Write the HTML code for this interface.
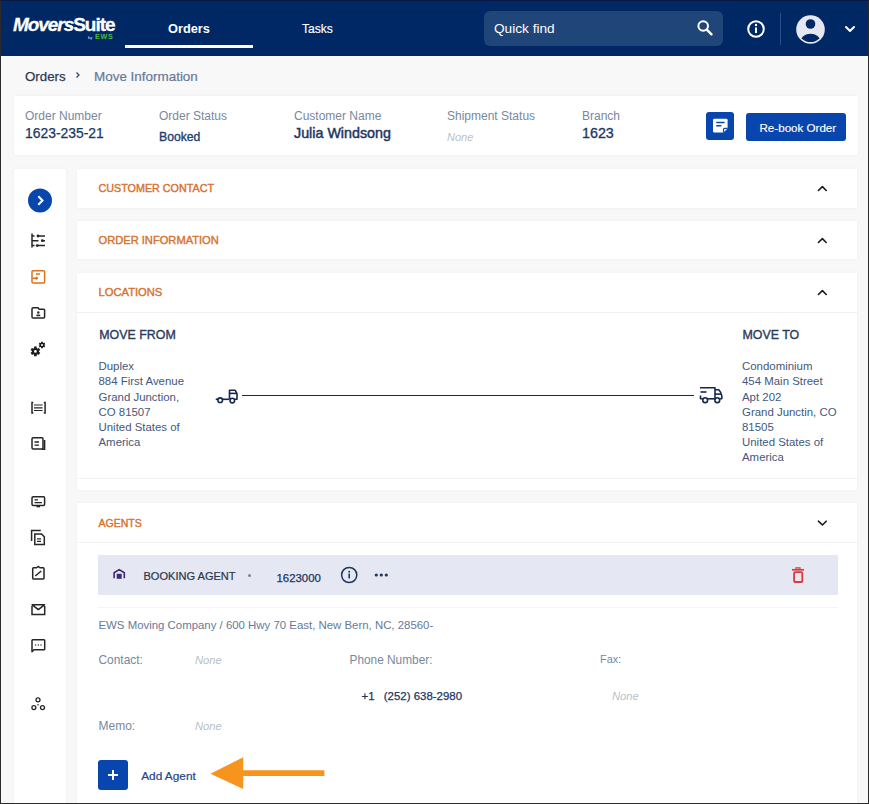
<!DOCTYPE html>
<html><head><meta charset="utf-8">
<style>
*{margin:0;padding:0;box-sizing:border-box}
html,body{width:869px;height:804px;overflow:hidden}
body{font-family:"Liberation Sans",sans-serif;background:#f8f8f8;position:relative}
.a{position:absolute;white-space:nowrap;line-height:normal}
svg.a{overflow:visible}
.card{position:absolute;background:#fff;box-shadow:0 0 3px rgba(0,0,0,0.05)}
#frame{position:absolute;left:0;top:0;width:869px;height:804px;border:1px solid #2b2b2b;border-top-color:#0a1a45;z-index:50}
</style></head><body>
<div class="a" style="left:0px;top:0px;width:869px;height:56px;background:#002864;"></div>
<div class="a" style="left:13px;top:13.92px;font-size:19px;color:#fff;font-weight:bold;-webkit-text-stroke:0.3px #fff;letter-spacing:-1.05px"><i>Movers</i>Suite</div>
<div class="a" style="left:88px;top:34.82px;font-size:4px;color:#dfe6f0">by</div>
<div class="a" style="left:95px;top:32.18px;font-size:7.2px;color:#4cbb3c;font-weight:bold;letter-spacing:0.75px">EWS</div>
<div class="a" style="left:168px;top:21.22px;font-size:12.8px;color:#fff;font-weight:bold">Orders</div>
<div class="a" style="left:125px;top:45px;width:128px;height:2.5px;background:#fff;"></div>
<div class="a" style="left:302px;top:21.87px;font-size:12.1px;color:#fff;-webkit-text-stroke:0.15px #fff">Tasks</div>
<div class="a" style="left:484px;top:11px;width:239px;height:35px;background:#204578;border-radius:6px"></div>
<div class="a" style="left:494px;top:21.44px;font-size:13.65px;color:#fff">Quick find</div>
<svg class="a" style="left:690px;top:14px" width="30" height="28" viewBox="0 0 30 28"><circle cx="13.2" cy="12" r="4.8" fill="none" stroke="#fff" stroke-width="2"/><path d="M16.8 15.6 L21.5 20.3" stroke="#fff" stroke-width="2.4" stroke-linecap="round"/></svg>
<svg class="a" style="left:744px;top:17px" width="24" height="24" viewBox="0 0 24 24"><circle cx="12" cy="12" r="7.8" fill="none" stroke="#fff" stroke-width="2"/><rect x="11" y="10.5" width="2" height="5.5" fill="#fff"/><circle cx="12" cy="8" r="1.2" fill="#fff"/></svg>
<div class="a" style="left:780px;top:13px;width:1px;height:32px;background:#2a4f86;"></div>
<svg class="a" style="left:795px;top:14px" width="31" height="31" viewBox="0 0 31 31"><defs><clipPath id="av"><circle cx="15.5" cy="15.5" r="12.6"/></clipPath></defs><circle cx="15.5" cy="15.5" r="14.3" fill="#e6e8f1"/><g clip-path="url(#av)"><circle cx="15.5" cy="10" r="4.8" fill="#002864"/><ellipse cx="15.5" cy="27.5" rx="10" ry="7.8" fill="#002864"/></g></svg>
<svg class="a" style="left:843px;top:22px" width="14" height="14" viewBox="0 0 14 14"><path d="M3 5 L7 9 L11 5" fill="none" stroke="#fff" stroke-width="2" stroke-linecap="round" stroke-linejoin="round"/></svg>
<div class="a" style="left:25px;top:68.76px;font-size:13.3px;color:#2c3a55;-webkit-text-stroke:0.25px #2c3a55">Orders</div>
<svg class="a" style="left:74px;top:70px" width="8" height="10" viewBox="0 0 8 10"><path d="M2.5 2.5 L5 5 L2.5 7.5" fill="none" stroke="#3a4a66" stroke-width="1.3"/></svg>
<div class="a" style="left:94px;top:68.63px;font-size:13.45px;color:#66789a;-webkit-text-stroke:0.2px #66789a">Move Information</div>
<div class="card" style="left:14px;top:96px;width:844px;height:59px"></div>
<div class="a" style="left:25px;top:109.26px;font-size:12px;color:#7a889e">Order Number</div>
<div class="a" style="left:159px;top:109.26px;font-size:12px;color:#7a889e">Order Status</div>
<div class="a" style="left:294px;top:109.26px;font-size:12px;color:#7a889e">Customer Name</div>
<div class="a" style="left:447px;top:109.26px;font-size:12px;color:#7a889e">Shipment Status</div>
<div class="a" style="left:582px;top:109.26px;font-size:12px;color:#7a889e">Branch</div>
<div class="a" style="left:25px;top:125.21px;font-size:13.9px;color:#1b365f;-webkit-text-stroke:0.25px #1b365f">1623-235-21</div>
<div class="a" style="left:159px;top:129.78px;font-size:12.2px;color:#22406e;-webkit-text-stroke:0.35px #22406e">Booked</div>
<div class="a" style="left:294px;top:124.84px;font-size:14.3px;color:#1b365f;-webkit-text-stroke:0.45px #1b365f">Julia Windsong</div>
<div class="a" style="left:447px;top:130.88px;font-size:11px;color:#b8bfca;font-style:italic">None</div>
<div class="a" style="left:582px;top:124.84px;font-size:14.3px;color:#1b365f;-webkit-text-stroke:0.3px #1b365f">1623</div>
<div class="a" style="left:706px;top:112px;width:28px;height:28px;background:#0846ad;border-radius:3px"></div>
<svg class="a" style="left:706px;top:112px" width="28" height="28" viewBox="706 112 28 28"><path d="M714.5 118.8 H726.2 Q727.6 118.8 727.6 120.2 V128.5 L723.5 132.6 H714.5 Q713 132.6 713 131.2 V120.2 Q713 118.8 714.5 118.8 Z" fill="#fff"/><path d="M716.3 122.4 H724.6 M716.3 125.7 H721.4" stroke="#0846ad" stroke-width="1.5"/><path d="M727.6 128.3 H724.8 Q723.5 128.3 723.5 129.6 V132.6" fill="none" stroke="#0846ad" stroke-width="1.2"/></svg>
<div class="a" style="left:746px;top:113px;width:100px;height:28px;background:#0846ad;border-radius:3px"></div>
<div class="a" style="left:759.5px;top:120.53px;font-size:11.6px;color:#fff;-webkit-text-stroke:0.15px #fff">Re-book Order</div>
<div class="card" style="left:14px;top:169px;width:52px;height:640px"></div>
<svg class="a" style="left:0;top:0" width="66" height="804" viewBox="0 0 66 804">
<circle cx="40" cy="200.5" r="12" fill="#0846ad"/>
<path d="M38.3 196.3 L42.5 200.5 L38.3 204.7" fill="none" stroke="#fff" stroke-width="2"/>
<g fill="none" stroke="#262626" stroke-width="1.5">
<!-- sliders -->
<path d="M32 233.5 V247.6"/>
<path d="M32 236 H34.5 M37.5 236 H45"/>
<path d="M32 240.7 H38.5 M42 240.7 H45"/>
<path d="M32 245.6 H34.5 M37 245.6 H45"/>
<!-- orange form -->
<rect x="32" y="270.7" width="12.6" height="12.3" rx="1" stroke="#e0701e"/>
<path d="M35.8 274 H40" stroke="#e0701e"/>
<path d="M32.5 278.2 H38" stroke="#e0701e"/>
<!-- folder -->
<path d="M32 309 V317 Q32 318 33 318 H43.6 Q44.6 318 44.6 317 V310 Q44.6 309.2 43.6 309.2 H39.2 L38 307.8 H33 Q32 307.8 32 309 Z"/>
<path d="M36.3 315.4 H40.2" stroke-width="1.6"/>
<!-- list bracket -->
<path d="M33.3 402.5 H32 V413 H33.3 M43.8 402.5 H45.1 V413 H43.8"/>
<path d="M34 405 H42.6 M34 407.8 H42.6 M34 410.5 H42.6" stroke-width="1.2"/>
<!-- doc -->
<rect x="32" y="437.7" width="11" height="11.3" rx="1.2"/>
<path d="M44.6 440 V449.2 H42"/>
<path d="M34.5 442 H39 M34.5 445.1 H39" stroke-width="1.3"/>
<!-- monitor -->
<rect x="32" y="496.8" width="12.6" height="8.6" rx="1.2"/>
<path d="M34.5 499.8 H38 M34.5 502.6 H42" stroke-width="1.2"/>
<path d="M36.5 506.5 H40" stroke-width="1.6"/>
<!-- copy docs -->
<path d="M31.6 541 V530.6 H40.8"/>
<path d="M34.8 534 H41.5 L44.3 536.8 V544.5 H34.8 Z"/>
<path d="M37 538.9 H41 M37 541.4 H41" stroke-width="1.2"/>
<!-- clipboard edit -->
<path d="M36.5 567.8 H33.5 Q32.7 567.8 32.7 568.6 V578.3 Q32.7 579 33.5 579 H43.2 Q44 579 44 578.3 V568.6 Q44 567.8 43.2 567.8 H40 L38.3 566.4 Z"/>
<path d="M35.3 576 L41.2 571" stroke-width="1.6"/>
<!-- mail -->
<path d="M32 606 V614.5 H44.7 V606"/>
<path d="M32.2 604.8 H44.5 L38.3 609.6 Z" stroke-linejoin="round"/>
<!-- chat -->
<path d="M32 651.8 V640.6 Q32 639.8 32.8 639.8 H44 Q44.7 639.8 44.7 640.6 V649 Q44.7 649.8 44 649.8 H34 Z" stroke-linejoin="round"/>
<!-- network -->
<circle cx="38" cy="699.8" r="2" stroke-width="1.3"/>
<circle cx="33.9" cy="707.6" r="2" stroke-width="1.3"/>
<circle cx="42.5" cy="707.6" r="2" stroke-width="1.3"/>
</g>
<g fill="#262626">
<path d="M38 278.2 l-2.2 -2.2 v4.4 z" fill="#e0701e"/>
<circle cx="38.3" cy="312.5" r="1.2"/>
<circle cx="38" cy="236" r="1.4"/><circle cx="42.3" cy="240.7" r="1.4"/><circle cx="37.2" cy="245.6" r="1.4"/>
<circle cx="35.5" cy="645" r="0.7"/><circle cx="38.3" cy="645" r="0.7"/><circle cx="41" cy="645" r="0.7"/>
<circle cx="38" cy="704.8" r="0.8"/>
</g>
<path d="M33.98 346.61 L36.82 346.61 L36.64 348.02 L37.71 348.64 L38.84 347.77 L40.26 350.23 L38.95 350.78 L38.95 352.02 L40.26 352.57 L38.84 355.03 L37.71 354.16 L36.64 354.78 L36.82 356.19 L33.98 356.19 L34.16 354.78 L33.09 354.16 L31.96 355.03 L30.54 352.57 L31.85 352.02 L31.85 350.78 L30.54 350.23 L31.96 347.77 L33.09 348.64 L34.16 348.02 Z M36.80 351.40 A1.4 1.4 0 1 0 34.00 351.40 A1.4 1.4 0 1 0 36.80 351.40 Z M41.03 341.74 L42.97 341.74 L42.86 342.65 L43.60 343.08 L44.34 342.53 L45.31 344.21 L44.46 344.57 L44.46 345.43 L45.31 345.79 L44.34 347.47 L43.60 346.92 L42.86 347.35 L42.97 348.26 L41.03 348.26 L41.14 347.35 L40.40 346.92 L39.66 347.47 L38.69 345.79 L39.54 345.43 L39.54 344.57 L38.69 344.21 L39.66 342.53 L40.40 343.08 L41.14 342.65 Z M43.00 345.00 A1.0 1.0 0 1 0 41.00 345.00 A1.0 1.0 0 1 0 43.00 345.00 Z" fill="#1a1a1a" fill-rule="evenodd"/>
</svg>
<div class="card" style="left:77px;top:169px;width:780px;height:39px"></div>
<div class="a" style="left:98.5px;top:182.20px;font-size:10.76px;color:#d6722f;-webkit-text-stroke:0.4px #d6722f">CUSTOMER CONTACT</div>
<div class="card" style="left:77px;top:221px;width:780px;height:38px"></div>
<div class="a" style="left:98.5px;top:234.36px;font-size:11.13px;color:#d6722f;-webkit-text-stroke:0.4px #d6722f">ORDER INFORMATION</div>
<div class="card" style="left:77px;top:273px;width:780px;height:217px"></div>
<div class="a" style="left:77px;top:478px;width:780px;height:1px;background:#f3f3f5;"></div>
<div class="a" style="left:98.5px;top:286.31px;font-size:11.19px;color:#d6722f;-webkit-text-stroke:0.4px #d6722f">LOCATIONS</div>
<div class="a" style="left:77px;top:312px;width:780px;height:1px;background:#f0f1f4;"></div>
<div class="a" style="left:99.3px;top:327.79px;font-size:12.4px;color:#2b3b5c;-webkit-text-stroke:0.35px #2b3b5c">MOVE FROM</div>
<div class="a" style="left:742.5px;top:327.79px;font-size:12.4px;color:#2b3b5c;-webkit-text-stroke:0.35px #2b3b5c">MOVE TO</div>
<div class="a" style="left:98.5px;top:359.2px;font-size:11.43px;line-height:15.2px;color:#44587c;white-space:pre">Duplex
884 First Avenue
Grand Junction,
CO 81507
United States of
America</div>
<div class="a" style="left:742px;top:359.2px;font-size:11.43px;line-height:15.2px;color:#44587c;white-space:pre">Condominium
454 Main Street
Apt 202
Grand Junctin, CO
81505
United States of
America</div>
<div class="a" style="left:242px;top:394.5px;width:452px;height:1.6px;background:#14284d;"></div>
<svg class="a" style="left:205px;top:380px" width="540" height="30" viewBox="205 380 540 30">
<g fill="none" stroke="#14284d" stroke-width="1.6" stroke-linejoin="round">
<path d="M215.7 399.3 H229"/>
<circle cx="220.2" cy="400.2" r="2.3" fill="#fff"/>
<path d="M229.5 399.3 V390.3 H235.2 L237 393.6 V399.3 H234.8"/>
<path d="M229.5 393.4 H236.8"/>
<circle cx="232.3" cy="400.6" r="2.3" fill="#fff"/>
<path d="M700 387.8 H715 V398.8 H719.8"/>
<path d="M700.5 392 H706.5"/>
<path d="M700.5 395.6 V398.8 H702.8"/>
<path d="M707.6 398.8 H715"/>
<path d="M715 389.8 H718.8 Q721.5 392.8 721.8 395.8 V398.8 H720"/>
<path d="M715 394.1 H721"/>
<circle cx="705.2" cy="400.2" r="2.4" fill="#fff"/>
<circle cx="717.3" cy="400.2" r="2.4" fill="#fff"/>
</g></svg>
<div class="card" style="left:77px;top:503px;width:780px;height:310px"></div>
<div class="a" style="left:98.5px;top:517.14px;font-size:10.5px;color:#d6722f;-webkit-text-stroke:0.4px #d6722f">AGENTS</div>
<div class="a" style="left:77px;top:542px;width:780px;height:1px;background:#f3f3f5;"></div>
<div class="a" style="left:98px;top:555px;width:740px;height:40px;background:#e5e8f3;"></div>
<div class="a" style="left:98px;top:607px;width:740px;height:1px;background:#f4f4f6;"></div>
<svg class="a" style="left:108px;top:565px" width="20" height="20" viewBox="108 565 20 20"><path d="M114.1 578.3 V572.8 L119.2 569.6 L124.3 572.8 V578.3" fill="none" stroke="#3d2a78" stroke-width="1.6" stroke-linejoin="round"/><rect x="116.7" y="573.8" width="5" height="5" fill="#3d2a78"/></svg>
<div class="a" style="left:143.5px;top:569.63px;font-size:11.05px;color:#2a3648;-webkit-text-stroke:0.2px #2a3648">BOOKING AGENT</div>
<div class="a" style="left:248px;top:573.5px;width:3px;height:3px;background:#7a8699;border-radius:50%"></div>
<div class="a" style="left:276.5px;top:571.51px;font-size:11.4px;color:#1b365f;-webkit-text-stroke:0.25px #1b365f">1623000</div>
<svg class="a" style="left:339px;top:565px" width="52" height="20" viewBox="339 565 52 20"><circle cx="349.2" cy="575" r="7.6" fill="none" stroke="#1f3460" stroke-width="1.5"/><rect x="348.4" y="573.6" width="1.6" height="4.8" fill="#1f3460"/><circle cx="349.2" cy="571.7" r="0.95" fill="#1f3460"/><circle cx="376.3" cy="575" r="1.6" fill="#1f3460"/><circle cx="381.3" cy="575" r="1.6" fill="#1f3460"/><circle cx="386.3" cy="575" r="1.6" fill="#1f3460"/></svg>
<svg class="a" style="left:788px;top:565px" width="20" height="22" viewBox="788 565 20 22"><path d="M792 569.8 H804" stroke="#d93a3f" stroke-width="1.7"/><path d="M796 569 V567.8 H800 V569" fill="none" stroke="#d93a3f" stroke-width="1.2"/><rect x="794.1" y="572.2" width="8.2" height="9.8" rx="1" fill="none" stroke="#d93a3f" stroke-width="1.8"/></svg>
<div class="a" style="left:98.5px;top:619.49px;font-size:11.42px;color:#66799b">EWS Moving Company / 600 Hwy 70 East, New Bern, NC, 28560-</div>
<div class="a" style="left:98.5px;top:652.52px;font-size:11.93px;color:#7a889e">Contact:</div>
<div class="a" style="left:195px;top:653.80px;font-size:11.2px;color:#b8bfca;font-style:italic">None</div>
<div class="a" style="left:349.5px;top:652.90px;font-size:11.85px;color:#7a889e">Phone Number:</div>
<div class="a" style="left:600px;top:653.48px;font-size:11px;color:#7a889e">Fax:</div>
<div class="a" style="left:361.5px;top:690.27px;font-size:11.45px;color:#1b365f;-webkit-text-stroke:0.25px #1b365f">+1</div>
<div class="a" style="left:383.8px;top:690.27px;font-size:11.45px;color:#1b365f;-webkit-text-stroke:0.25px #1b365f">(252) 638-2980</div>
<div class="a" style="left:612px;top:690.00px;font-size:11.2px;color:#b8bfca;font-style:italic">None</div>
<div class="a" style="left:98.5px;top:718.76px;font-size:12px;color:#7a889e">Memo:</div>
<div class="a" style="left:195px;top:720.10px;font-size:11.2px;color:#b8bfca;font-style:italic">None</div>
<div class="a" style="left:98px;top:760px;width:30px;height:30px;background:#0846ad;border-radius:3px"></div>
<svg class="a" style="left:98px;top:760px" width="30" height="30" viewBox="0 0 30 30"><path d="M15 10 V20 M10 15 H20" stroke="#fff" stroke-width="2"/></svg>
<div class="a" style="left:141.2px;top:768.71px;font-size:11.84px;color:#23458a;-webkit-text-stroke:0.2px #23458a">Add Agent</div>
<svg class="a" style="left:205px;top:752px" width="125" height="42" viewBox="205 752 125 42"><path d="M210.5 773.8 L243.2 757.2 V770.3 H324.4 V776.1 H243.2 V789.1 Z" fill="#f7941d"/></svg>
<svg class="a" style="left:800px;top:160px" width="40" height="380" viewBox="800 160 40 380"><g fill="none" stroke="#1a1a1a" stroke-width="1.6" stroke-linecap="round" stroke-linejoin="round">
<path d="M818.4 190.5 L822.4 186.6 L826.2 190.5"/>
<path d="M818.4 242.5 L822.4 238.6 L826.2 242.5"/>
<path d="M818.4 294.5 L822.4 290.6 L826.2 294.5"/>
<path d="M818.4 521.2 L822.4 525 L826.2 521.2"/>
</g></svg>
<div id="frame"></div>
</body></html>
